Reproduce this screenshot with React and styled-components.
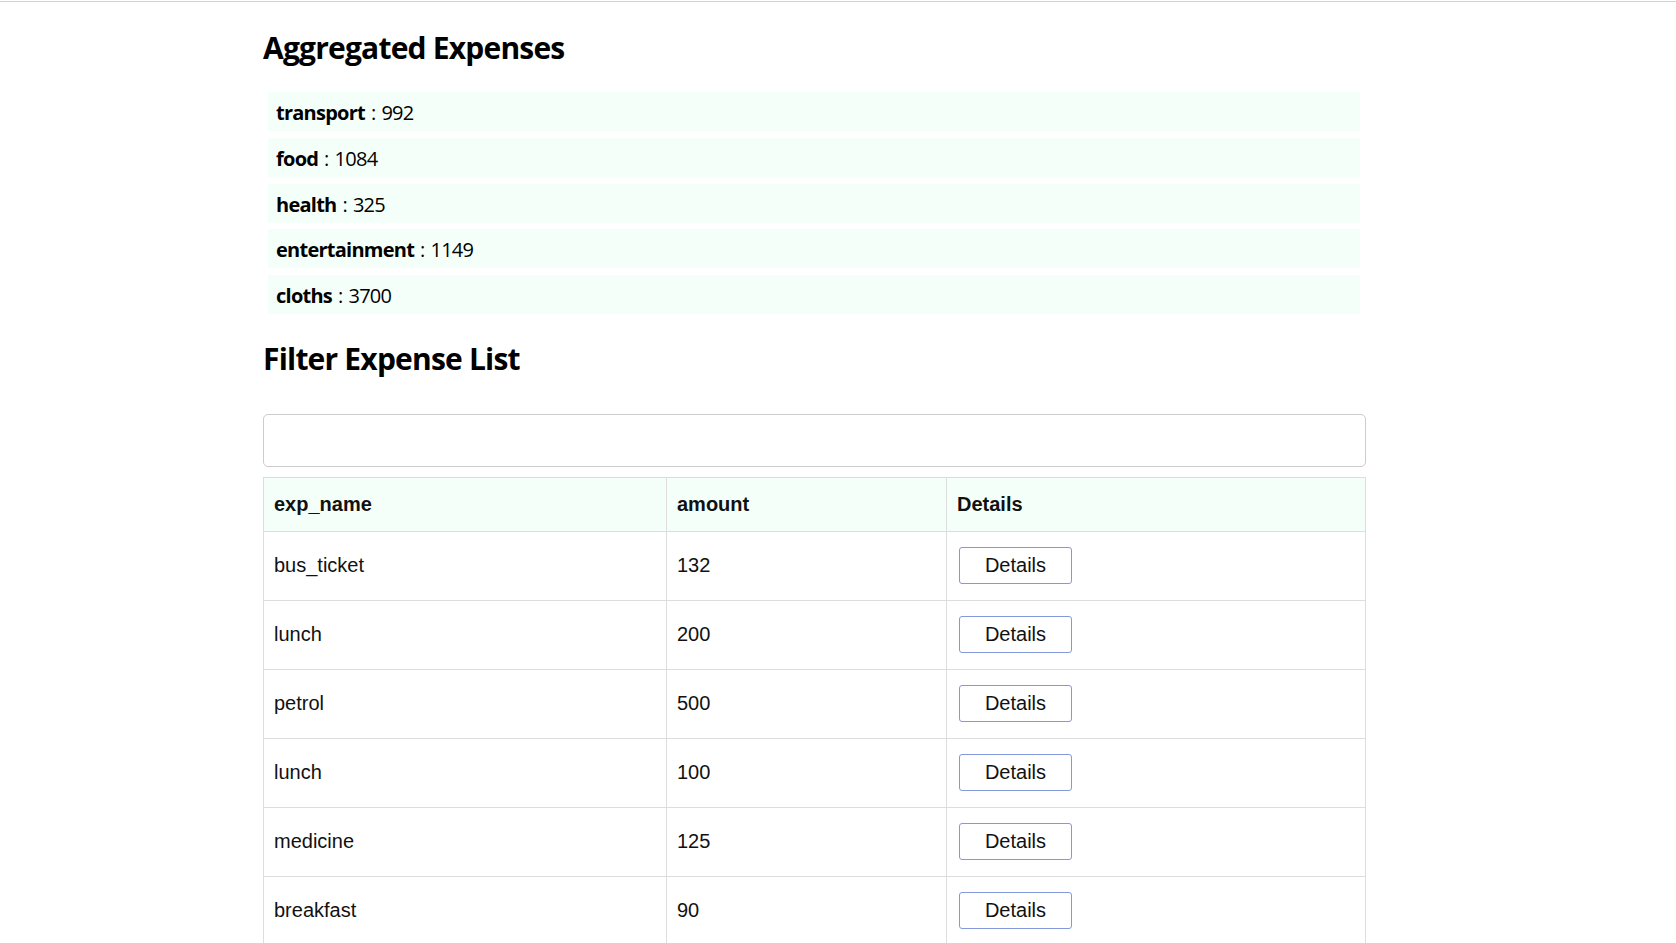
import styled, { createGlobalStyle } from "styled-components";

const aggregated = [
  { category: "transport", total: 992 },
  { category: "food", total: 1084 },
  { category: "health", total: 325 },
  { category: "entertainment", total: 1149 },
  { category: "cloths", total: 3700 },
];

const expenses = [
  { exp_name: "bus_ticket", amount: 132 },
  { exp_name: "lunch", amount: 200 },
  { exp_name: "petrol", amount: 500 },
  { exp_name: "lunch", amount: 100 },
  { exp_name: "medicine", amount: 125 },
  { exp_name: "breakfast", amount: 90 },
];

const GlobalStyle = createGlobalStyle`
  body {
    margin: 0;
    background: white;
    font-family: "Open Sans", "Noto Sans", sans-serif;
    color: black;
  }
`;

const TopRule = styled.div`
  height: 1px;
  margin-top: 1px;
  background-color: #d3d3d3;
`;

const Content = styled.div`
  width: 1103px;
  margin-left: 263px;
  padding-bottom: 40px;
`;

const Title = styled.h2`
  font-size: 30px;
  font-weight: bold;
  line-height: 40px;
  letter-spacing: -0.8px;
  margin: ${(props) => props.$top}px 0 0 0;
`;

const AggList = styled.div`
  display: flex;
  flex-direction: column;
  gap: 6.8px;
  margin: 24px 6px 0 5px;
`;

const AggItem = styled.div`
  height: 39px;
  box-sizing: border-box;
  display: flex;
  align-items: center;
  padding: 2px 0 0 8px;
  background-color: #f5fffa;
  font-size: 20px;
  letter-spacing: -0.75px;
  word-spacing: 1.5px;
`;

const SearchInput = styled.input`
  display: block;
  width: 100%;
  height: 53px;
  margin-top: 35px;
  box-sizing: border-box;
  border: 1px solid #cccccc;
  border-radius: 5px;
  padding: 0 12px;
  font-size: 20px;
  outline: none;
`;

const Table = styled.table`
  width: 100%;
  margin-top: 10px;
  border-collapse: collapse;
  border: 1px solid #dddddd;
  font-family: "Liberation Sans", Arial, sans-serif;
  font-size: 20px;
  color: #111;
`;

const HeadCell = styled.th`
  width: ${(props) => props.$width}px;
  height: 53px;
  padding: 0 10px;
  text-align: left;
  font-weight: bold;
  background-color: #f5fffa;
  border: 1px solid #dddddd;
`;

const Cell = styled.td`
  height: 66px;
  padding: 0 10px 2px;
  border: 1px solid #dddddd;
`;

const DetailsButton = styled.button`
  width: 113px;
  height: 37px;
  margin-left: 2px;
  background: white;
  border: 1px solid #8598dc;
  border-radius: 3px;
  font-family: "Liberation Sans", Arial, sans-serif;
  font-size: 20px;
  color: #111;
  cursor: pointer;
`;

const App = () => {
  return (
    <>
      <GlobalStyle />
      <TopRule />
      <Content>
        <Title $top={26}>Aggregated Expenses</Title>
        <AggList>
          {aggregated.map((item) => (
            <AggItem key={item.category}>
              <b>{item.category}</b>&nbsp;: {item.total}
            </AggItem>
          ))}
        </AggList>
        <Title $top={25}>Filter Expense List</Title>
        <SearchInput type="text" />
        <Table>
          <thead>
            <tr>
              <HeadCell $width={382}>exp_name</HeadCell>
              <HeadCell $width={259}>amount</HeadCell>
              <HeadCell>Details</HeadCell>
            </tr>
          </thead>
          <tbody>
            {expenses.map((exp, i) => (
              <tr key={i}>
                <Cell>{exp.exp_name}</Cell>
                <Cell>{exp.amount}</Cell>
                <Cell>
                  <DetailsButton>Details</DetailsButton>
                </Cell>
              </tr>
            ))}
          </tbody>
        </Table>
      </Content>
    </>
  );
};

export default App;
